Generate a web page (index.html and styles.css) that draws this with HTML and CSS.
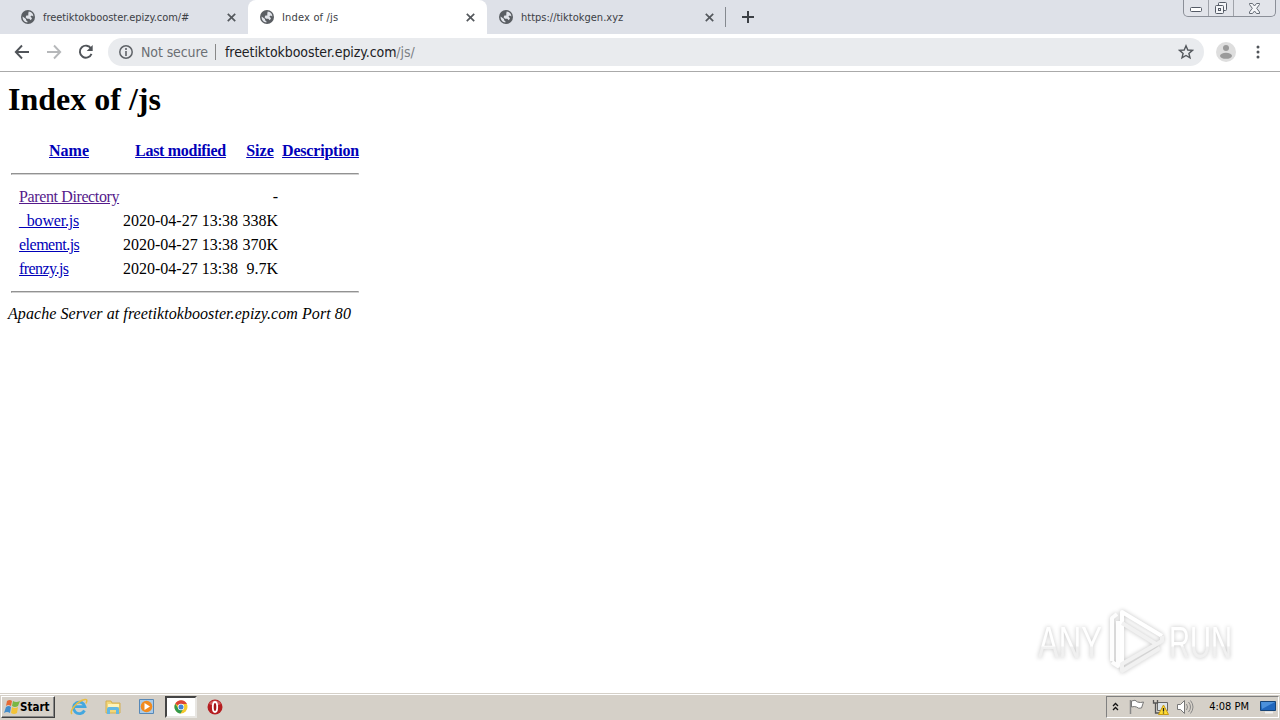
FILE: index.html
```html
<!DOCTYPE html>
<html lang="en">
<head>
  <meta charset="UTF-8">
  <title>Index of /js</title>
  <link rel="stylesheet" href="styles.css">
</head>
<body>
  <svg width="0" height="0" class="defs">
    <symbol id="globe" viewBox="0 0 14 14">
      <circle cx="7" cy="7" r="7" fill="#5a5e63"/>
      <path d="M1.6 6.5 5 9v1.2l1.4 1v1.3C3.500 12.300 1.500 10 1.600 6.500zM7.700 1.600C10.500 1.800 12.300 4 12.400 6.400L10.800 5.500 9.400 6.600 11 8.200 9.800 10.200 8.300 8.800H6L4.600 7.200 5.400 5.400H7.300V3.600z" fill="#e1e4ea"/>
    </symbol>
    <symbol id="cross" viewBox="0 0 8 8">
      <path d="M.7.7l6.600 6.600M7.300.7L.7 7.300" stroke="#54585d" stroke-width="1.500"/>
    </symbol>
  </svg>

  <div class="tabs">
    <div class="tab first">
      <svg class="globe"><use href="#globe"/></svg>
      <span class="t1">freetiktokbooster.epizy.com/#</span>
      <svg class="cross"><use href="#cross"/></svg>
    </div>
    <div class="tab active">
      <svg class="globe"><use href="#globe"/></svg>
      <span class="t2">Index of /js</span>
      <svg class="cross"><use href="#cross"/></svg>
    </div>
    <div class="tab last">
      <svg class="globe"><use href="#globe"/></svg>
      <span class="t3">https://tiktokgen.xyz</span>
      <svg class="cross"><use href="#cross"/></svg>
    </div>
    <svg class="plus" width="12" height="12"><path d="M6 0v12M0 6h12" stroke="#3c4045" stroke-width="2"/></svg>
    <div class="window-buttons">
      <span class="min"><svg width="13" height="6"><rect x=".5" y=".5" width="11" height="4" rx="1" fill="#fff" stroke="#555b66"/></svg></span>
      <span class="max"><svg width="14" height="13" fill="#f4f5f8" stroke="#555b66"><rect x="4.500" y=".5" width="8" height="8" rx="1"/><rect x="1.500" y="3.500" width="8" height="8" rx="1"/><rect x="4.500" y="6.500" width="2" height="2"/></svg></span>
      <span class="close"><svg width="13" height="11"><path d="M1.500.5h3l2 2.500 2-2.500h3v1L8.700 5.300l2.800 3.700v1.500h-3l-2-2.500-2 2.500h-3V9l2.800-3.700L1.500 1.500z" fill="#f4f5f8" stroke="#666c76"/></svg></span>
    </div>
  </div>

  <div class="toolbar">
    <svg width="100" height="36" fill="none" stroke="#505459" stroke-width="1.900">
      <path d="M29 17H16.500M22 10.500L15.800 17l6.200 6.500"/>
      <path d="M47 17h12.500M54 10.500l6.200 6.500-6.200 6.500" stroke="#b6b8ba"/>
      <path d="M91.100 13.700A6 6 0 1 0 91.500 18.800"/>
      <path d="M92.700 10v6h-6z" fill="#505459" stroke="none"/>
    </svg>
    <div class="omnibox">
      <svg width="14" height="14" fill="none" stroke="#5f6368"><circle cx="7" cy="7" r="6.200" stroke-width="1.500"/><path d="M7 6v5M7 3v2" stroke-width="1.600"/></svg>
      <span class="secure">Not secure</span>
      <span class="url">freetiktokbooster.epizy.com<span>/js/</span></span>
      <svg class="star" width="16" height="16"><path d="M8 1.800l1.800 4.200 4.600.4-3.500 3 1.100 4.500L8 11.500l-4 2.400 1.100-4.500-3.500-3 4.600-.4z" fill="none" stroke="#54585d" stroke-width="1.400"/></svg>
    </div>
    <svg class="avatar" width="20" height="20"><circle cx="10" cy="10" r="10" fill="#dedede"/><circle cx="10" cy="6" r="3" fill="#9a9a9a"/><ellipse cx="10" cy="13.800" rx="6" ry="3" fill="#9a9a9a"/></svg>
    <svg class="menu" width="4" height="14" fill="#505459"><circle cx="2" cy="2" r="1.500"/><circle cx="2" cy="7" r="1.500"/><circle cx="2" cy="12" r="1.500"/></svg>
  </div>

  <main>
    <h1>Index of /js</h1>
    <table>
      <tr class="head">
        <th class="icon">&nbsp;</th>
        <th class="name"><a href="#">Name</a></th>
        <th class="date"><a href="#">Last modified</a></th>
        <th class="size"><a href="#">Size</a></th>
        <th class="desc"><a href="#">Description</a></th>
      </tr>
      <tr><th colspan="5" class="rule"><hr></th></tr>
      <tr><td></td><td><a class="visited" href="#">Parent Directory</a></td><td></td><td class="right">-</td><td></td></tr>
      <tr><td></td><td><a class="bower" href="#">_bower.js</a></td><td>2020-04-27 13:38</td><td class="right">338K</td><td></td></tr>
      <tr><td></td><td><a class="element" href="#">element.js</a></td><td>2020-04-27 13:38</td><td class="right">370K</td><td></td></tr>
      <tr><td></td><td><a class="frenzy" href="#">frenzy.js</a></td><td>2020-04-27 13:38</td><td class="right">9.7K</td><td></td></tr>
      <tr><th colspan="5" class="rule"><hr></th></tr>
    </table>
    <address>Apache Server at freetiktokbooster.epizy.com Port 80</address>
    <svg class="watermark" width="220" height="76">
      <defs><linearGradient id="fade" x2="0" y2="1"><stop offset=".56" stop-color="#fff"/><stop offset=".6" stop-color="#f0f0f0"/></linearGradient></defs>
      <g class="brand" fill="url(#fade)">
        <text x="8" y="54" textLength="64" lengthAdjust="spacingAndGlyphs">ANY</text>
        <text x="139" y="54" textLength="63" lengthAdjust="spacingAndGlyphs">RUN</text>
      </g>
      <g fill="none" stroke-width="4" stroke-linejoin="round">
        <path d="M82 57V14l5-4M88 17v45l-6-4" stroke="#fdfdfd"/>
        <path d="M92 60V8L132 32" stroke="#fff"/>
        <path d="M92 19L126 40M132 32v5L92 60v7l38-23" stroke="#f1f1f1"/>
      </g>
    </svg>
  </main>

  <footer>
    <div class="start">
      <svg width="17" height="16"><path d="M3 2q3-2 5 0L7 7q-3-2-5 0z" fill="#e66a35"/><path d="M9 2q3 2 7 0l-2 5q-3 2-6 0z" fill="#79b743"/><path d="M2 8q3-2 5 0l-1 6q-3-2-6 0z" fill="#438dcc"/><path d="M8 8q3 2 6 0l-1 6q-3 2-6 0z" fill="#f3c338"/></svg>
      <span>Start</span>
    </div>
    <div class="launch">
      <span><svg width="18" height="18"><path d="M14.500 12.500A5.800 5.800 0 1 1 15 8.700H5" fill="none" stroke="#43a7df" stroke-width="2.800"/><path d="M2 16C-1 13 7 3 15 1.500c2.500-.3 2 2 1 4" fill="none" stroke="#e8bd43" stroke-width="1.500"/></svg></span>
      <span><svg width="18" height="18"><path d="M2 3h5l1 2h8v10H2z" fill="#f2d779" stroke="#d3ae50"/><path d="M4 6h11v3H4z" fill="#fff3b9"/><path d="M3 16v-5q0-2 2-2h8q2 0 2 2v5h-3v-4H6v4z" fill="#62b8e3"/></svg></span>
      <span><svg width="18" height="18"><path d="M1.500 1.500h14v14h-14z" fill="#a9cbe9" stroke="#5788b7"/><circle cx="8.500" cy="8.500" r="5.800" fill="#f18b20"/><path d="M6.500 5v7l5.500-3.500z" fill="#fff"/></svg></span>
      <span class="current"><svg width="14" height="14"><circle cx="7" cy="7" r="6.500" fill="#f5c92e"/><path d="M7 7L1.200 3.800A6.600 6.600 0 0 1 13 4H7z" fill="#dc4436"/><path d="M1.200 3.800A6.600 6.600 0 0 0 6.500 13.500L9.500 8.500 4 8z" fill="#32994e"/><circle cx="7" cy="7" r="3.200" fill="#fff"/><circle cx="7" cy="7" r="2.500" fill="#4283d6"/></svg></span>
      <span><svg width="16" height="16"><circle cx="8" cy="8" r="7.500" fill="#b51d20"/><path d="M2 5a7 7 0 0 1 12 0q-6 3-12 0" fill="#d4595b"/><ellipse cx="8" cy="8" rx="2.200" ry="5" fill="#a51518" stroke="#fff" stroke-width="1.800"/></svg></span>
    </div>
    <div class="tray">
      <svg width="7" height="9" fill="none" stroke="#111" stroke-width="1.300"><path d="M1 4l2.500-2.500L6 4M1 8l2.500-2.500L6 8"/></svg>
      <svg class="flag" width="18" height="18"><path d="M2.500 2v14" stroke="#888" stroke-width="1.500"/><path d="M3.500 3q4-2 6 1 3 1 6 0l-2 6q-3 1-5-1-2-1-5 0z" fill="#fff" stroke="#777"/></svg>
      <svg class="net" width="18" height="18"><path d="M5.500 4.500h10v8h-10z" fill="#dde4e9" stroke="#666"/><path d="M1.500 2v3h4V2M3.500 5v10h4" fill="none" stroke="#555" stroke-width="1.300"/><path d="M11.500 7l5 9.500h-10z" fill="#ffdc32" stroke="#c79912"/><path d="M11.500 10v3.500M11.500 14.500v1" stroke="#222" stroke-width="1.300"/></svg>
      <svg class="sound" width="18" height="18"><path d="M1.500 6.500h3l4-4v13l-4-4h-3z" fill="#fff" stroke="#777"/><path d="M10.500 6q2 3 0 6M12.500 4q4 5 0 10M14.500 2.500q5 6.500 0 13" fill="none" stroke="#888"/></svg>
      <span class="clock">4:08 PM</span>
      <svg width="16" height="16"><path d="M.5 2.500h15v9H.5z" fill="#2167bd" stroke="#164477"/><path d="M1 3h14L2 10z" fill="#4c91db"/><path d="M5 13.500h8" stroke="#efefef" stroke-width="2"/></svg>
    </div>
  </footer>
</body>
</html>
```
FILE: styles.css
```css
body {
  margin: 0;
  height: 720px;
  display: flex;
  flex-direction: column;
  overflow: hidden;
  background: #fff;
  font-family: "DejaVu Sans Condensed", "DejaVu Sans", sans-serif;
}
svg { display: block; flex: none; }
.defs { position: absolute; }
.tabs {
  height: 34px;
  flex: none;
  display: flex;
  background: #dee1e8;
}
.tab {
  width: 239px;
  height: 34px;
  box-sizing: border-box;
  display: flex;
  align-items: center;
  padding: 0 12px;
  font-size: 11px;
  color: #3c4045;
  white-space: nowrap;
}
.tab.first { width: 248px; padding-left: 21px; }
.tab.active { background: #fff; border-radius: 8px 8px 0 0; }
.tab.last { background: linear-gradient(#85898f, #85898f) right 7px / 1px 20px no-repeat; }
.globe { width: 14px; height: 14px; margin-right: 8px; }
.cross { width: 9px; height: 9px; margin-left: auto; }
.t1 { letter-spacing: -0.05px; }
.t2 { letter-spacing: 0.17px; }
.plus { margin: 11px 0 0 16px; }
.window-buttons {
  display: flex;
  box-sizing: border-box;
  width: 93px;
  height: 17px;
  margin-left: auto;
  margin-right: 4px;
  border: 1px solid #8b8f98;
  border-top: 0;
  border-radius: 0 0 5px 5px;
  background: #e2e4ea;
}
.window-buttons span { display: flex; align-items: center; justify-content: center; }
.window-buttons .min { width: 24px; padding-top: 4px; }
.window-buttons .max { width: 24px; border: solid #a0a3aa; border-width: 0 1px; }
.window-buttons .close { flex: 1; }

.toolbar {
  height: 37px;
  flex: none;
  display: flex;
  align-items: center;
  border-bottom: 1px solid #aaa;
}
.omnibox {
  width: 1096px;
  height: 28px;
  margin: -2px 0 0 8px;
  box-sizing: border-box;
  border-radius: 14px;
  background: #e9ebee;
  display: flex;
  align-items: center;
  padding: 0 10px 0 11px;
  font-size: 14px;
  white-space: nowrap;
}
.secure {
  color: #6b6f74;
  margin-left: 8px;
  width: 74px;
  border-right: 1px solid #888;
  line-height: 16px;
  letter-spacing: -0.1px;
}
.url { margin-left: 9px; color: #202124; letter-spacing: -0.07px; }
.url span { color: #7b7f84; }
.star { margin-left: auto; }
.avatar { margin: -2px 0 0 12px; }
.menu { margin: -1px 0 0 20px; }

main {
  flex: 1;
  position: relative;
  padding: 0 8px;
  font: 16px "Liberation Serif", serif;
}
h1 { font-size: 32px; line-height: 36px; margin: 9px 0 21px; }
table { border-spacing: 2px; table-layout: fixed; width: 353px; }
th, td { padding: 1px; height: 20px; line-height: 18px; white-space: nowrap; text-align: left; }
.head th { text-align: center; }
.icon { width: 4px; }
.name { width: 100px; }
.date { width: 115px; letter-spacing: -0.3px; }
.size { width: 36px; }
.desc { width: 77px; letter-spacing: -0.2px; }
.rule { height: 18px; }
.rule hr { margin: 8px 0; border: 1px solid; border-color: #929292 #d2d2d2 #d2d2d2 #929292; }
.right { text-align: right; }
a { color: #0000b8; }
.visited { color: #551a8b; letter-spacing: -0.38px; }
.bower { letter-spacing: -0.2px; }
.element { letter-spacing: -0.5px; }
.frenzy { letter-spacing: -0.55px; }
address { margin-top: 1px; line-height: 18px; letter-spacing: 0.07px; }
.watermark { position: absolute; left: 1030px; top: 532px; filter: drop-shadow(0 0 2px #c4c4c4); }
.brand { font: 45px "Liberation Sans", sans-serif; }

footer {
  height: 25px;
  flex: none;
  display: flex;
  align-items: center;
  background: #d5d0c8;
  border-top: 1px solid #d5d0c8;
  box-shadow: inset 0 1px #fff;
  padding: 0 1px 1px;
}
.start {
  box-sizing: border-box;
  width: 54px;
  height: 22px;
  display: flex;
  align-items: center;
  border: 1px solid;
  border-color: #fff #404040 #404040 #fff;
  box-shadow: inset -1px -1px #888;
  padding-left: 2px;
  font-size: 11.5px;
  font-weight: bold;
}
.start span { margin-left: -1px; }
.launch { display: flex; margin-left: 7px; }
.launch span { width: 34px; height: 22px; display: flex; align-items: center; justify-content: center; }
.launch .current {
  box-sizing: border-box;
  width: 32px;
  margin: 0 1px;
  background: #fff;
  border: 2px solid;
  border-color: #444 #e8e6e2 #e8e6e2 #444;
}
.tray {
  box-sizing: border-box;
  width: 173px;
  height: 22px;
  margin-left: auto;
  display: flex;
  align-items: center;
  border: 1px solid;
  border-color: #808080 #fff #fff #808080;
  padding: 0 2px 0 5px;
}
.flag { margin-left: 9px; }
.net { margin-left: 6px; }
.sound { margin-left: 6px; }
.clock { margin-left: auto; margin-right: 11px; font-size: 11px; white-space: nowrap; }
```
